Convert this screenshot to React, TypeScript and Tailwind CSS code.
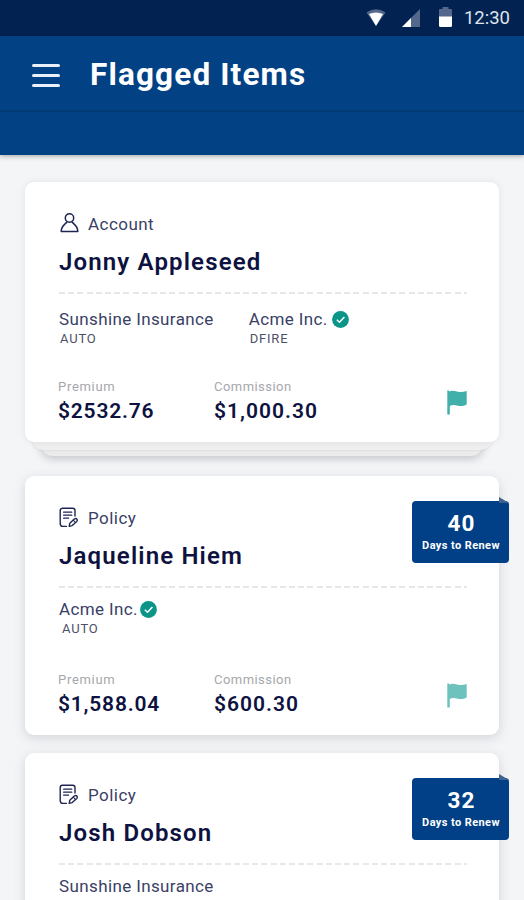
import clsx from 'clsx';

interface Carrier {
  name: string;
  line?: string;
  verified?: boolean;
}

interface FlaggedItem {
  id: number;
  type: 'Account' | 'Policy';
  name: string;
  carriers: Carrier[];
  premium: string;
  commission: string;
  daysToRenew?: number;
}

const items: FlaggedItem[] = [
  {
    id: 1,
    type: 'Account',
    name: 'Jonny Appleseed',
    carriers: [
      { name: 'Sunshine Insurance', line: 'AUTO' },
      { name: 'Acme Inc.', line: 'DFIRE', verified: true },
    ],
    premium: '$2532.76',
    commission: '$1,000.30',
  },
  {
    id: 2,
    type: 'Policy',
    name: 'Jaqueline Hiem',
    carriers: [{ name: 'Acme Inc.', line: 'AUTO', verified: true }],
    premium: '$1,588.04',
    commission: '$600.30',
    daysToRenew: 40,
  },
  {
    id: 3,
    type: 'Policy',
    name: 'Josh Dobson',
    carriers: [{ name: 'Sunshine Insurance' }],
    premium: '',
    commission: '',
    daysToRenew: 32,
  },
];

function AccountIcon() {
  return (
    <svg width="20" height="21" viewBox="0 0 20 21" fill="none" stroke="#1f2552" strokeWidth="1.5" strokeLinejoin="round">
      <circle cx="10.5" cy="5" r="4.2" />
      <path d="M8 9C6.6 11 2.2 12.4 2.2 18.4H18.8C18.8 12.4 14.4 11 13 9" />
    </svg>
  );
}

function PolicyIcon() {
  return (
    <svg width="20" height="21" viewBox="0 0 20 21" fill="none" stroke="#1f2552" strokeWidth="1.4" strokeLinecap="round" strokeLinejoin="round">
      <path d="M16 9V3.6Q16 1.2 13.6 1.2H3.4Q1.2 1.2 1.2 3.6V16.4Q1.2 19.4 4 19.4H7.4" />
      <path d="M4.6 5.2H12.8M4.6 8.2H12.8M4.6 11.2H9.6" strokeWidth="1.2" />
      <path d="M10.2 19.4L10.8 16.2L15.6 11.8Q17 11 18 12.2Q18.8 13.4 17.8 14.4L13.2 18.6Z" />
      <path d="M14.2 13.2L16.4 15.4" strokeWidth="1.1" />
    </svg>
  );
}

function VerifiedIcon() {
  return (
    <svg width="17" height="17" viewBox="0 0 17 17" fill="none">
      <circle cx="8.5" cy="8.5" r="8.4" fill="#0b9488" />
      <path d="M4.8 8.8L7.5 11.2L12.4 5.9" stroke="white" strokeWidth="1.5" />
    </svg>
  );
}

function FlagIcon() {
  return (
    <svg width="20" height="25" viewBox="0 0 20 25" fill="currentColor">
      <path d="M0.3 0.5H2V1.5C5 0 7.5 0.8 10 1.5C13 2.3 16 2.2 19.7 1V14.6C16 16.4 13 16.4 10 15.6C7.5 14.8 5 14.8 2.8 16V24.5H0.3Z" />
    </svg>
  );
}

function StatusBar() {
  return (
    <div className="flex h-[36px] items-center justify-end bg-[#022252] pr-[14px] text-white">
      <svg width="20" height="18" viewBox="0 0 20 18">
        <path d="M0.5 3.5Q10 -3 19.5 3.5L10 17Z" fill="#53688b" />
        <path d="M3 5Q10 1.8 17 5L10 17Z" fill="white" />
      </svg>
      <svg className="ml-[16px]" width="18" height="18" viewBox="0 0 18 18">
        <path d="M0 18L18 0V18Z" fill="#53688b" />
        <path d="M0 18L9 9V18Z" fill="white" />
      </svg>
      <svg className="ml-[19px] -mt-[2px]" width="13" height="20" viewBox="0 0 13 20">
        <path d="M0 3Q0 2 1 2H3.5V0H9.5V2H12Q13 2 13 3V10H0Z" fill="#53688b" />
        <path d="M0 9.5H13V18.5Q13 20 11.5 20H1.5Q0 20 0 18.5Z" fill="white" />
      </svg>
      <span className="ml-[12px] text-[18.5px] leading-none text-[#dfe4ec]">12:30</span>
    </div>
  );
}

function RenewBadge({ days }: { days: number }) {
  return (
    <div className="absolute top-[25px] -right-[10px] h-[62px] w-[97px] rounded-[4px] bg-[#013f86] text-center font-bold text-white">
      <svg className="absolute -top-[4px] right-0" width="10" height="6" viewBox="0 0 10 6">
        <path d="M0 0L10 6H0Z" fill="#3f638f" />
      </svg>
      <div className="mt-[10px] pl-[2px] text-[22.5px] leading-[24px] tracking-[1.2px]">{days}</div>
      <div className="mt-[4px] pl-[1px] text-[11px] leading-[14px] tracking-[0.4px] whitespace-nowrap">Days to Renew</div>
    </div>
  );
}

function ItemCard({ item }: { item: FlaggedItem }) {
  const isAccount = item.type === 'Account';
  return (
    <div className="relative">
      {isAccount && (
        <>
          <div className="absolute inset-x-[16px] -bottom-[14px] h-[24px] rounded-b-[12px] bg-[#ececed] shadow-[0_3px_8px_rgba(60,65,75,0.26)]" />
          <div className="absolute inset-x-[5px] -bottom-[8px] h-[20px] rounded-b-[14px] bg-[#efeff0] shadow-[0_1px_2px_rgba(60,65,75,0.08)]" />
        </>
      )}
      <div
        className={clsx(
          'relative rounded-[9px] bg-white pt-[31px] pr-[32px] pl-[34px] text-[#1f2552]',
          isAccount ? 'h-[260px] shadow-[0_0_7px_rgba(60,65,75,0.1)]' : 'h-[259px] shadow-[0_3px_12px_rgba(60,65,75,0.18)]'
        )}
      >
        <div className="flex h-[21px] items-center">
          {isAccount ? <AccountIcon /> : <PolicyIcon />}
          <span className="ml-[9px] pt-[2px] text-[17px] leading-[21px] tracking-[0.45px] text-[#3a4066]">{item.type}</span>
        </div>
        <h2 className="mt-[13px] text-[24px] leading-[30px] font-semibold tracking-[1.15px] whitespace-nowrap text-[#0e1240]">
          {item.name}
        </h2>
        <div className="mt-[15px] h-[2px] bg-[repeating-linear-gradient(90deg,#e6e7e9_0_6px,transparent_6px_9.2px)]" />

        <div className={clsx('flex h-[40px] gap-[35px]', isAccount ? 'mt-[15px]' : 'mt-[11px]')}>
          {item.carriers.map((carrier) => (
            <div key={carrier.name}>
              <div className="flex h-[20px] items-center text-[17px] leading-[20px] tracking-[0.38px] whitespace-nowrap text-[#3a4066]">
                {carrier.name}
                {carrier.verified && (
                  <span className={isAccount ? 'ml-[4px]' : 'ml-[2px]'}>
                    <VerifiedIcon />
                  </span>
                )}
              </div>
              <div className={clsx('text-[13px] leading-[20px] tracking-[0.8px] text-[#4c5068]', isAccount ? 'pl-[1px]' : 'pl-[3px]')}>
                {carrier.line}
              </div>
            </div>
          ))}
        </div>

        {item.premium && (
          <div className={clsx('-ml-[1px] flex items-start', isAccount ? 'mt-[29px]' : 'mt-[32px]')}>
            <div className="w-[156px]">
              <div className="text-[13px] leading-[18px] tracking-[0.7px] text-[#a6a7ac]">Premium</div>
              <div className="mt-[3px] text-[21px] leading-[24px] font-semibold tracking-[0.8px] text-[#0e1240]">{item.premium}</div>
            </div>
            <div>
              <div className="text-[13px] leading-[18px] tracking-[0.45px] text-[#a6a7ac]">Commission</div>
              <div className="mt-[3px] text-[21px] leading-[24px] font-semibold tracking-[1px] text-[#0e1240]">{item.commission}</div>
            </div>
            <div className={clsx('mt-[12px] ml-auto', isAccount ? 'text-[#41b0ab]' : 'text-[#6dc2bd]')}>
              <FlagIcon />
            </div>
          </div>
        )}
      </div>
      {item.daysToRenew && <RenewBadge days={item.daysToRenew} />}
    </div>
  );
}

export default function App() {
  return (
    <div className="h-[900px] w-[524px] overflow-hidden bg-[#f4f5f7] font-['Roboto',sans-serif]">
      <StatusBar />
      <header className="relative h-[119px] bg-[#014184] shadow-[0_1px_5px_rgba(0,0,0,0.35)]">
        <div className="flex h-[76px] items-center border-b-2 border-[#013b74] pt-[4px] pl-[32px]">
          <button className="flex flex-col gap-[7px]">
            <span className="h-[3px] w-[28px] rounded-full bg-[#eaf0fa]" />
            <span className="h-[3px] w-[28px] rounded-full bg-[#eaf0fa]" />
            <span className="h-[3px] w-[28px] rounded-full bg-[#eaf0fa]" />
          </button>
          <h1 className="ml-[30px] text-[31.5px] leading-[36px] font-bold tracking-[1.15px] text-white">Flagged Items</h1>
        </div>
      </header>
      <main className="px-[25px] pt-[27px]">
        <ItemCard item={items[0]} />
        <div className="mt-[34px] flex flex-col gap-[18px]">
          {items.slice(1).map((item) => (
            <ItemCard key={item.id} item={item} />
          ))}
        </div>
      </main>
    </div>
  );
}
